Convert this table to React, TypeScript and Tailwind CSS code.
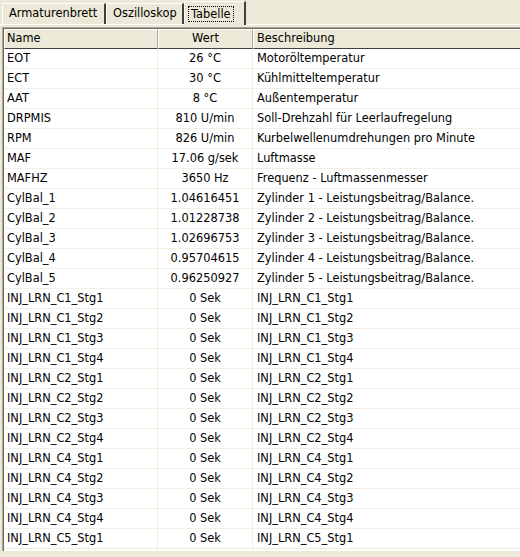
import React from 'react';

type Row = { name: string; value: string; desc: string };

const rows: Row[] = [
  { name: 'EOT', value: '26 °C', desc: 'Motoröltemperatur' },
  { name: 'ECT', value: '30 °C', desc: 'Kühlmitteltemperatur' },
  { name: 'AAT', value: '8 °C', desc: 'Außentemperatur' },
  { name: 'DRPMIS', value: '810 U/min', desc: 'Soll-Drehzahl für Leerlaufregelung' },
  { name: 'RPM', value: '826 U/min', desc: 'Kurbelwellenumdrehungen pro Minute' },
  { name: 'MAF', value: '17.06 g/sek', desc: 'Luftmasse' },
  { name: 'MAFHZ', value: '3650 Hz', desc: 'Frequenz - Luftmassenmesser' },
  { name: 'CylBal_1', value: '1.04616451', desc: 'Zylinder 1 - Leistungsbeitrag/Balance.' },
  { name: 'CylBal_2', value: '1.01228738', desc: 'Zylinder 2 - Leistungsbeitrag/Balance.' },
  { name: 'CylBal_3', value: '1.02696753', desc: 'Zylinder 3 - Leistungsbeitrag/Balance.' },
  { name: 'CylBal_4', value: '0.95704615', desc: 'Zylinder 4 - Leistungsbeitrag/Balance.' },
  { name: 'CylBal_5', value: '0.96250927', desc: 'Zylinder 5 - Leistungsbeitrag/Balance.' },
];

// INJ_LRN-Einträge: C1, C2, C4 komplett, C5 nur Stg1
for (const c of ['C1', 'C2', 'C4']) {
  for (const s of [1, 2, 3, 4]) {
    const n = `INJ_LRN_${c}_Stg${s}`;
    rows.push({ name: n, value: '0 Sek', desc: n });
  }
}
rows.push({ name: 'INJ_LRN_C5_Stg1', value: '0 Sek', desc: 'INJ_LRN_C5_Stg1' });

export default function App() {
  return (
    <div
      className="w-[520px] h-[557px] bg-[#ECE9D8] overflow-hidden text-[11.4px] text-black relative"
      style={{ fontFamily: '"DejaVu Sans", Tahoma, sans-serif' }}
    >
      {/* Reiter */}
      <div className="flex items-end h-[24px] pl-[2px]">
        <div className="w-[104px] h-[21px] border-t border-l border-white border-r-2 border-r-[#404040] pl-[6px] flex items-center">
          Armaturenbrett
        </div>
        <div className="w-[78px] h-[21px] border-t border-l border-white border-r-2 border-r-[#404040] pl-[6px] flex items-center">
          Oszilloskop
        </div>
        <div className="w-[62px] h-[24px] -mb-[1px] relative z-10 bg-[#ECE9D8] border-t border-l border-white border-r-2 border-r-[#404040] pl-[3px] flex items-center">
          <span className="border border-dotted border-black px-[2px] leading-[14px]">Tabelle</span>
        </div>
      </div>

      {/* Panel */}
      <div className="border-t border-white pt-[2px] pl-[2px]">
        <div className="border-l border-t border-[#ACA899]">
          <div className="border-l border-t border-[#716F64] bg-white">
            {/* Kopfzeile */}
            <div className="flex h-[20px] bg-[#ECE9D8]">
              <div className="w-[154px] border-t border-l border-white border-r border-r-[#ACA899] border-b border-b-[#404040] pl-[2px] flex items-center">
                Name
              </div>
              <div className="w-[95px] border-t border-l border-white border-r border-r-[#ACA899] border-b border-b-[#404040] flex items-center justify-center">
                Wert
              </div>
              <div className="flex-1 border-t border-l border-white border-b border-b-[#404040] pl-[3px] flex items-center">
                Beschreibung
              </div>
            </div>
            {rows.map((r) => (
              <div key={r.name} className="flex h-[20px] border-b border-[#F1EFE2]">
                <div className="w-[154px] border-r border-[#F1EFE2] pl-[3px] flex items-center whitespace-nowrap">
                  {r.name}
                </div>
                <div className="w-[95px] border-r border-[#F1EFE2] flex items-center justify-center whitespace-nowrap">
                  {r.value}
                </div>
                <div className="flex-1 pl-[4px] flex items-center whitespace-nowrap overflow-hidden">
                  {r.desc}
                </div>
              </div>
            ))}
            <div className="flex h-[4px]">
              <div className="w-[154px] border-r border-[#F1EFE2]" />
              <div className="w-[95px] border-r border-[#F1EFE2]" />
            </div>
          </div>
        </div>
      </div>
      <div className="absolute left-0 right-0 bottom-0 h-[6px] bg-[#ECE9D8]" />
    </div>
  );
}
